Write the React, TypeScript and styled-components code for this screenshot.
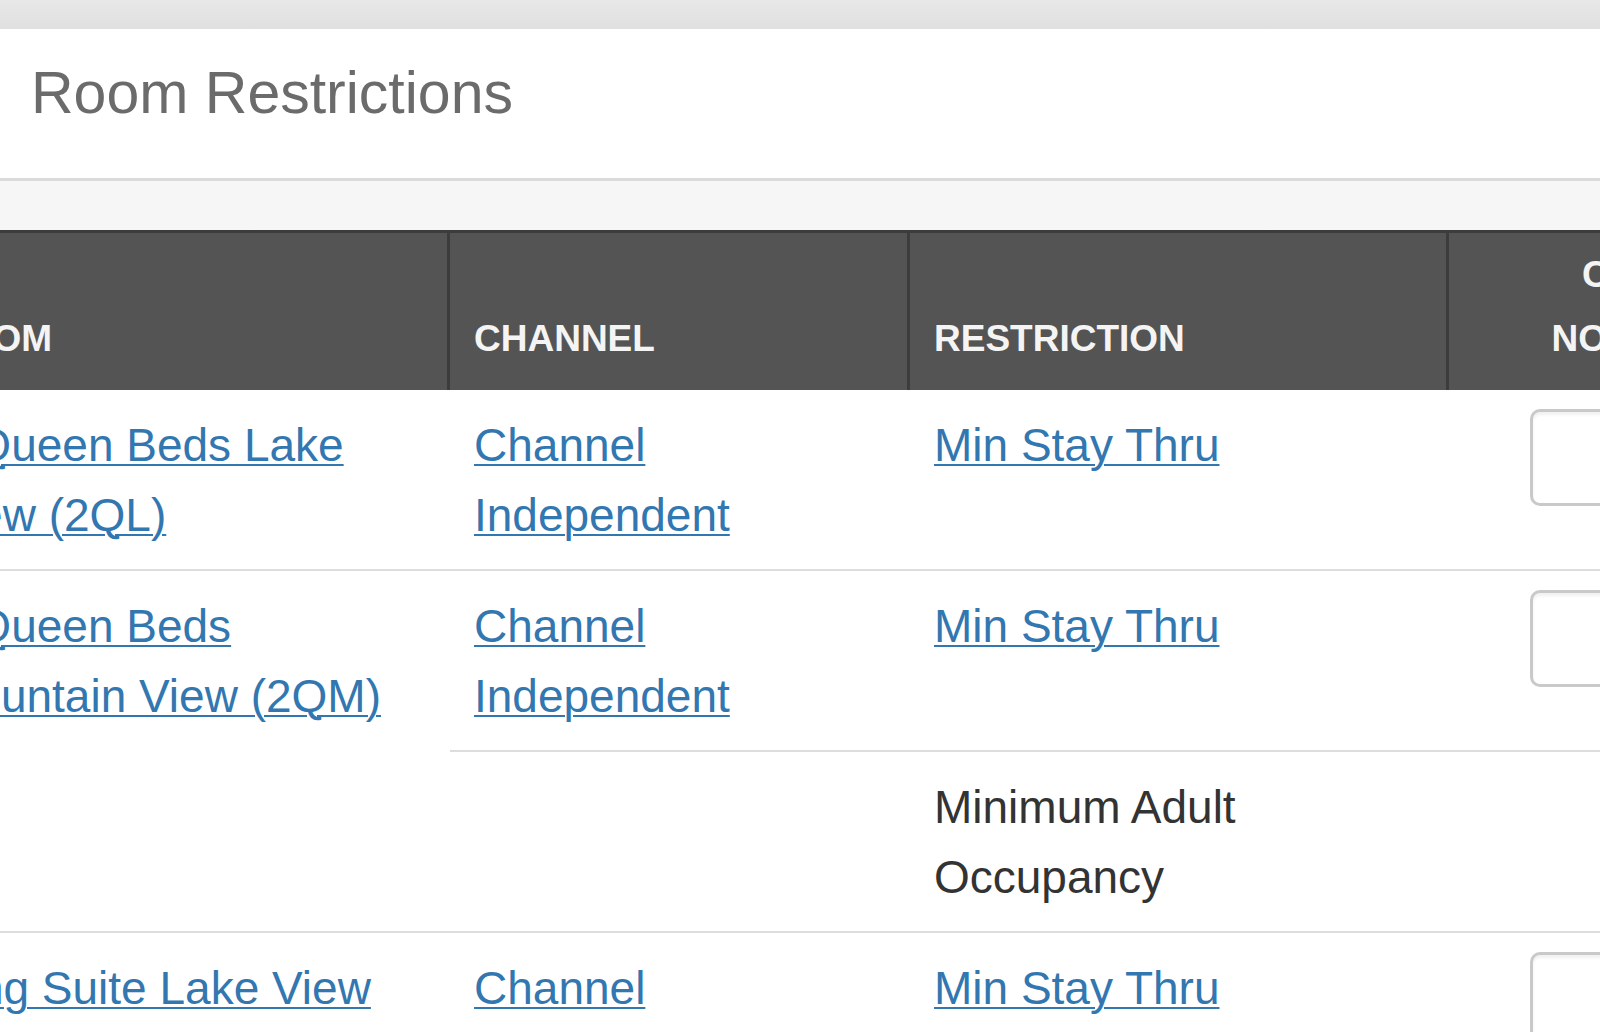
import React from 'react';
import styled, { createGlobalStyle } from 'styled-components';

const GlobalStyle = createGlobalStyle`
  html, body {
    margin: 0;
    padding: 0;
    background: #ffffff;
    overflow: hidden;
  }

  body {
    font-family: 'Liberation Sans', Arial, Helvetica, sans-serif;
    color: #333333;
  }
`;

const Page = styled.div`
  width: 1600px;
  min-height: 1032px;
  overflow: hidden;
`;

const TopBar = styled.div`
  height: 29px;
  background: linear-gradient(#e8e8e8, #e0e0e0);
`;

const PanelHeading = styled.div`
  background: #ffffff;
  padding: 32px 31px 52px;
  border-bottom: 3px solid #dadada;
`;

const Title = styled.h2`
  margin: 0;
  font-size: 59px;
  line-height: 1.1;
  font-weight: 400;
  color: #6b6b6b;
`;

const PanelBody = styled.div`
  background: linear-gradient(#f6f6f6, #fbfbfb);
  padding-top: 49px;
`;

const Table = styled.table`
  margin-left: -87px;
  width: 1956px;
  table-layout: fixed;
  border-collapse: separate;
  border-spacing: 0;
  background: #ffffff;
`;

const Col = styled.col<{ $w: number }>`
  width: ${(p) => p.$w}px;
`;

const HeadCell = styled.th<{ $last?: boolean }>`
  box-sizing: border-box;
  background: #545454;
  color: #f4f4f4;
  font-size: 37px;
  font-weight: 700;
  line-height: 64px;
  text-transform: uppercase;
  text-align: ${(p) => (p.$last ? 'center' : 'left')};
  vertical-align: bottom;
  padding: 10px 24px 19px;
  border-top: 3px solid #3c3c3c;
  border-right: ${(p) => (p.$last ? 'none' : '3px solid #3c3c3c')};
  white-space: nowrap;
`;

const Cell = styled.td<{ $divided?: boolean; $center?: boolean }>`
  box-sizing: border-box;
  vertical-align: top;
  padding: 20px 24px 19px;
  font-size: 46px;
  line-height: 70px;
  text-align: ${(p) => (p.$center ? 'center' : 'left')};
  border-top: ${(p) => (p.$divided ? '2px solid #dddddd' : 'none')};
`;

const LinkText = styled.a`
  color: #3277b0;
  text-decoration: underline;
  text-decoration-thickness: 2px;
  text-underline-offset: 3px;
`;

const PlainText = styled.span`
  color: #333333;
`;

const ValueInput = styled.input`
  display: inline-block;
  box-sizing: border-box;
  width: 258px;
  height: 97px;
  border: 3px solid #c9c9c9;
  border-radius: 10px;
  background: #ffffff;
  box-shadow: inset 0 3px 3px rgba(0, 0, 0, 0.06);
  font-size: 46px;
  font-family: inherit;
  padding: 0 20px;
  margin-top: -1px;
  vertical-align: top;
`;

interface RestrictionRow {
  room?: string;
  roomSpan?: number;
  channel?: string;
  restriction: string;
  restrictionLink: boolean;
  hasInput: boolean;
}

const rows: RestrictionRow[] = [
  {
    room: '2 Queen Beds Lake View (2QL)',
    channel: 'Channel Independent',
    restriction: 'Min Stay Thru',
    restrictionLink: true,
    hasInput: true,
  },
  {
    room: '2 Queen Beds Mountain View (2QM)',
    roomSpan: 2,
    channel: 'Channel Independent',
    restriction: 'Min Stay Thru',
    restrictionLink: true,
    hasInput: true,
  },
  {
    channel: '',
    restriction: 'Minimum Adult Occupancy',
    restrictionLink: false,
    hasInput: false,
  },
  {
    room: 'King Suite Lake View (KSL)',
    channel: 'Channel Independent',
    restriction: 'Min Stay Thru',
    restrictionLink: true,
    hasInput: true,
  },
];

export default function App() {
  return (
    <Page>
      <GlobalStyle />
      <TopBar />
      <PanelHeading>
        <Title>Room Restrictions</Title>
      </PanelHeading>
      <PanelBody>
        <Table>
          <colgroup>
            <Col $w={537} />
            <Col $w={460} />
            <Col $w={539} />
            <Col $w={420} />
          </colgroup>
          <thead>
            <tr>
              <HeadCell>Room</HeadCell>
              <HeadCell>Channel</HeadCell>
              <HeadCell>Restriction</HeadCell>
              <HeadCell $last>
                Closed
                <br />
                No Depart
              </HeadCell>
            </tr>
          </thead>
          <tbody>
            {rows.map((row, i) => (
              <tr key={i}>
                {row.room !== undefined && (
                  <Cell $divided={i > 0} rowSpan={row.roomSpan || 1}>
                    <LinkText href="#">{row.room}</LinkText>
                  </Cell>
                )}
                <Cell $divided={i > 0}>
                  {row.channel ? <LinkText href="#">{row.channel}</LinkText> : null}
                </Cell>
                <Cell $divided={i > 0}>
                  {row.restrictionLink ? (
                    <LinkText href="#">{row.restriction}</LinkText>
                  ) : (
                    <PlainText>{row.restriction}</PlainText>
                  )}
                </Cell>
                <Cell $divided={i > 0} $center>
                  {row.hasInput ? <ValueInput type="text" /> : null}
                </Cell>
              </tr>
            ))}
          </tbody>
        </Table>
      </PanelBody>
    </Page>
  );
}
